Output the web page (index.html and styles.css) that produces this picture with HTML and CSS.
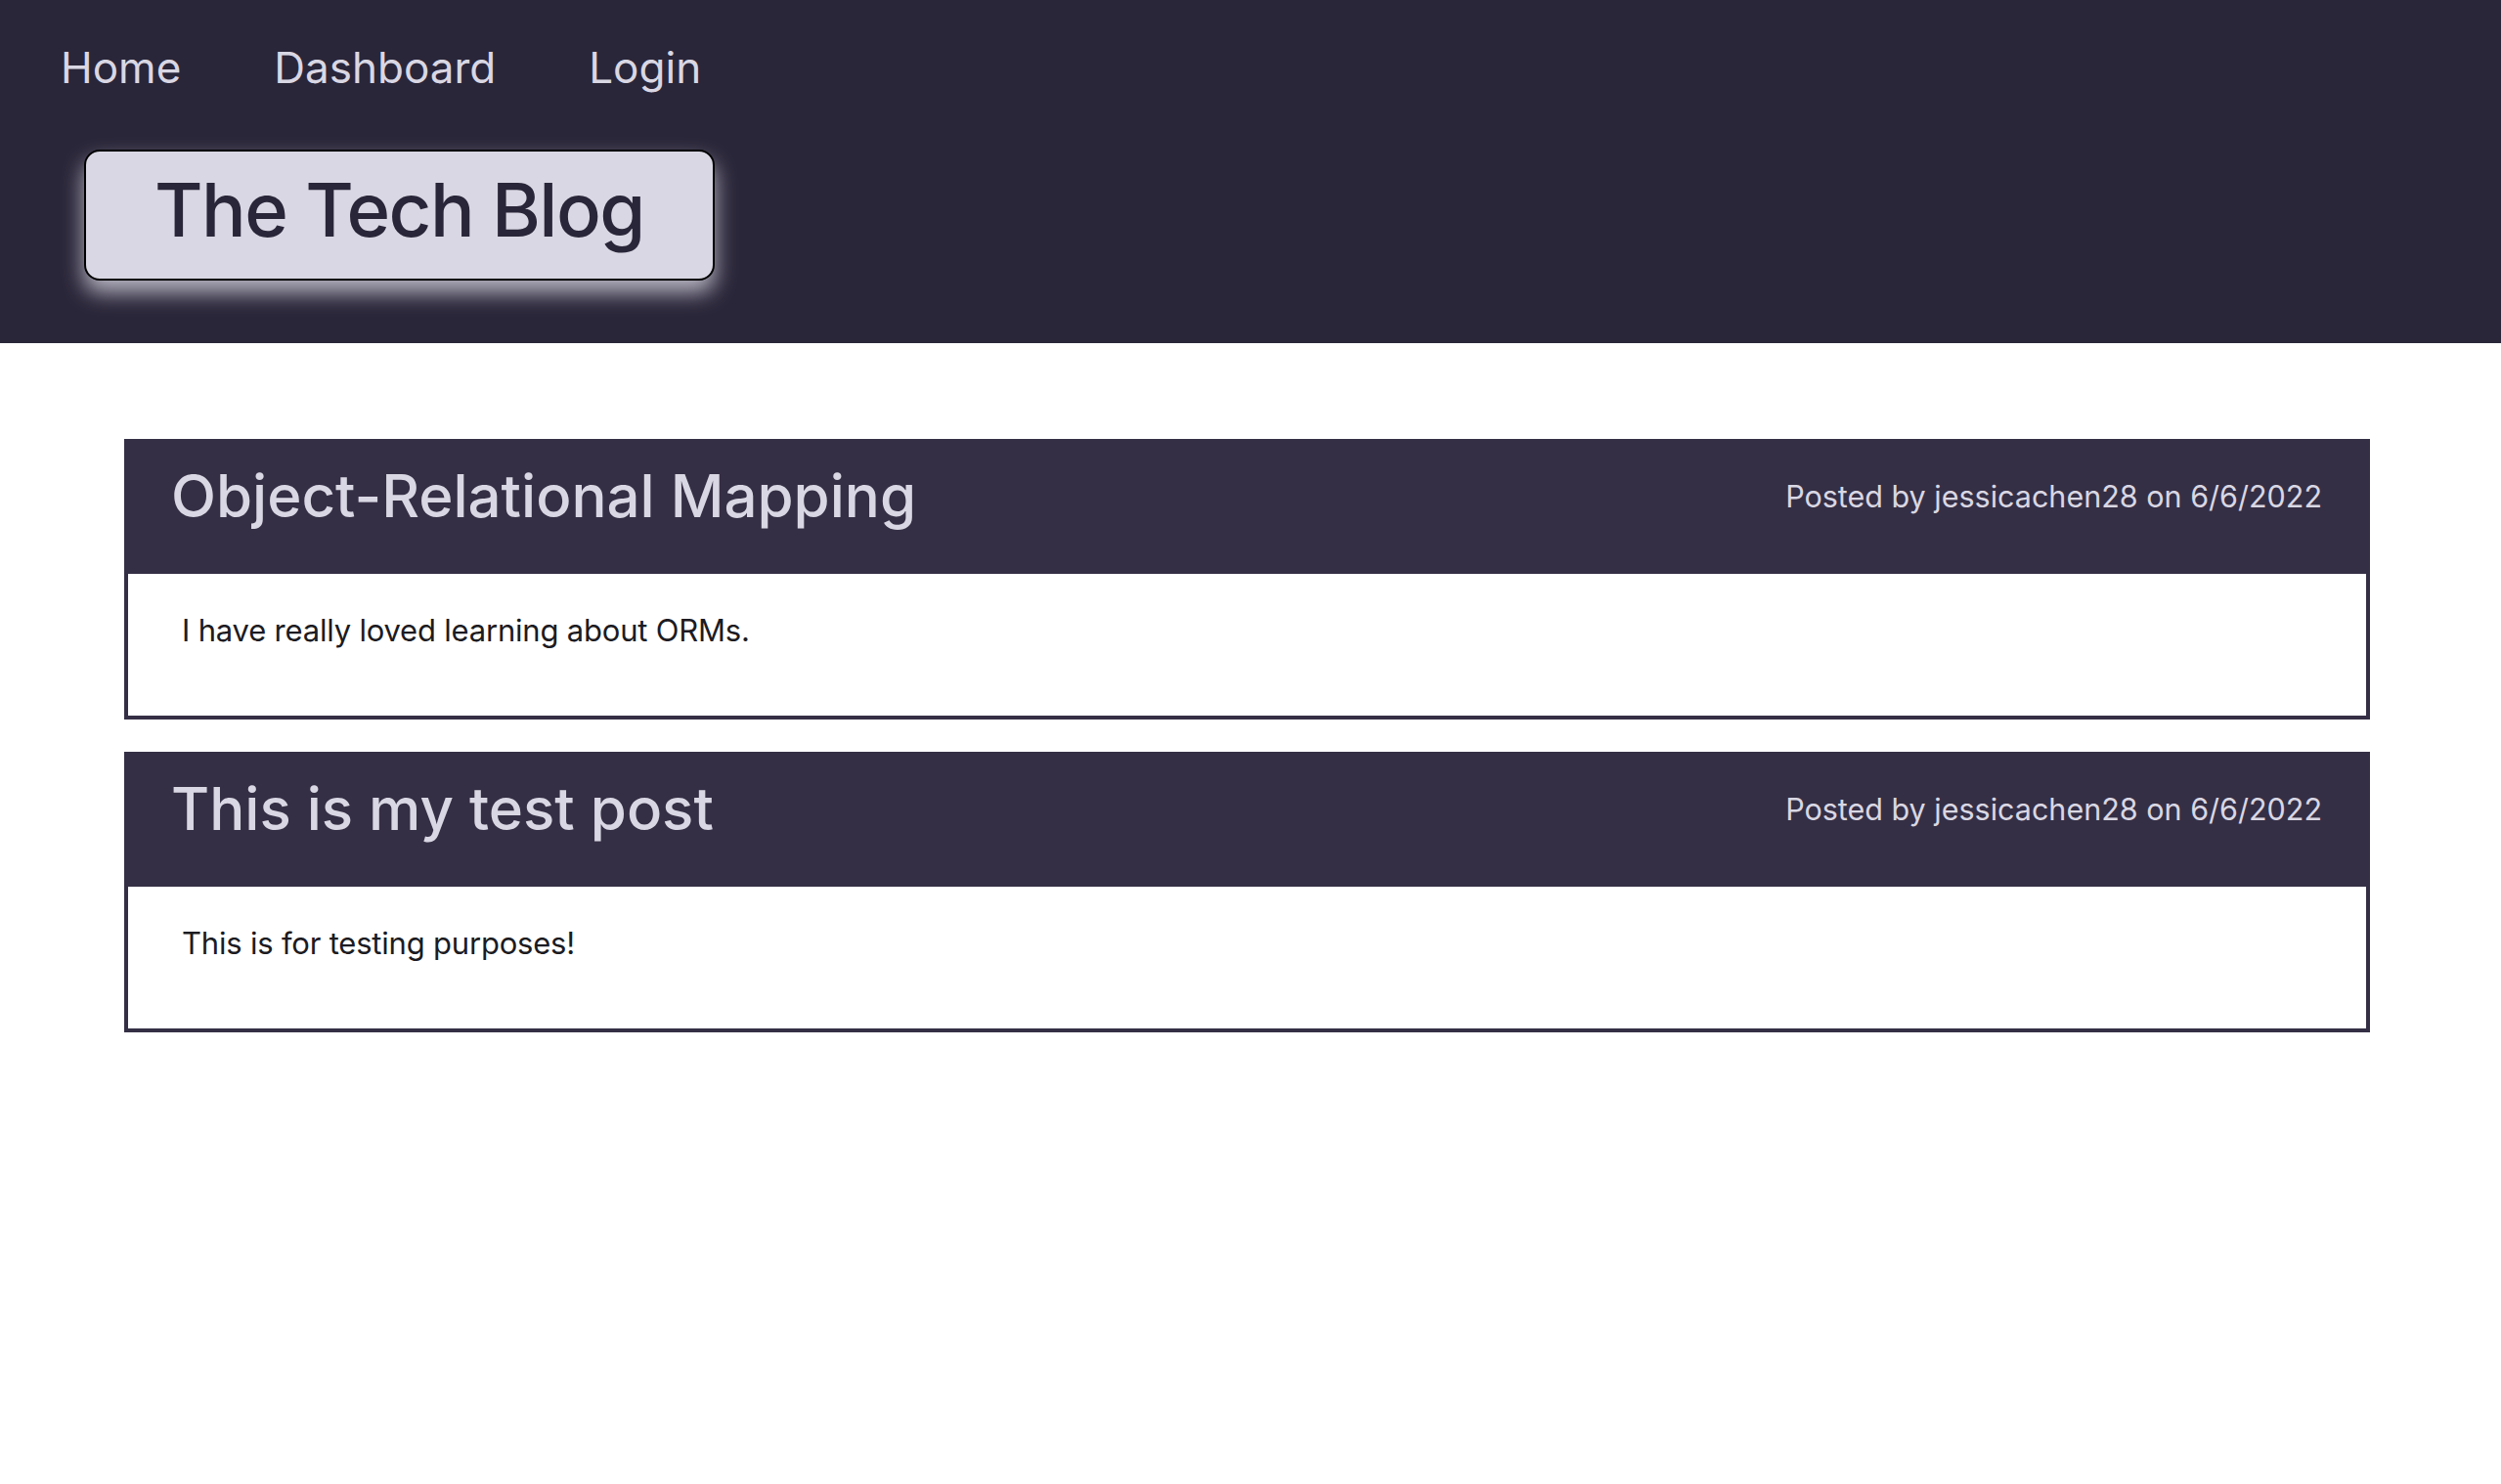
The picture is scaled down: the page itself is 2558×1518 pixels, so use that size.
FILE: index.html
```html
<!DOCTYPE html>
<html lang="en">
<head>
<meta charset="utf-8">
<title>The Tech Blog</title>
<link rel="stylesheet" href="styles.css">
</head>
<body>
<header class="site-header">
  <nav class="nav">
    <a class="nav-link" href="#">Home</a>
    <a class="nav-link" href="#">Dashboard</a>
    <a class="nav-link" href="#">Login</a>
  </nav>
  <div class="brand">
    <h1 class="brand-title">The Tech Blog</h1>
  </div>
</header>
<main class="posts">
  <article class="post">
    <div class="post-head">
      <h2 class="post-title">Object-Relational Mapping</h2>
      <span class="post-meta">Posted by jessicachen28 on 6/6/2022</span>
    </div>
    <div class="post-body">
      <p class="post-text">I have really loved learning about ORMs.</p>
    </div>
  </article>
  <article class="post">
    <div class="post-head">
      <h2 class="post-title">This is my test post</h2>
      <span class="post-meta">Posted by jessicachen28 on 6/6/2022</span>
    </div>
    <div class="post-body">
      <p class="post-text">This is for testing purposes!</p>
    </div>
  </article>
</main>
</body>
</html>
```
FILE: styles.css
```css
* { box-sizing: border-box; }
html, body {
  margin: 0;
  padding: 0;
  background: #ffffff;
  font-family: Inter, "Noto Sans", "Liberation Sans", sans-serif;
}
.site-header {
  background: #2a2639;
  padding: 36px 0 64px 0;
}
.nav {
  display: flex;
  gap: 95px;
  padding-left: 62px;
}
.nav-link {
  color: #d9d7e3;
  text-decoration: none;
  font-size: 44px;
  line-height: 66px;
}
.brand {
  display: inline-flex;
  margin: 51px 0 0 86px;
  background: #d9d7e3;
  border: 2px solid #000000;
  border-radius: 16px;
  box-shadow: 0 12px 22px rgba(217, 215, 227, 0.8);
  padding: 0 70px 12px 70px;
}
.brand-title {
  margin: 0;
  color: #2a2639;
  font-size: 76px;
  font-weight: 500;
  line-height: 118px;
  letter-spacing: -1.5px;
}
.posts {
  padding: 98px 134px 0 127px;
  display: flex;
  flex-direction: column;
  gap: 33px;
}
.post {
  border: 4px solid #352f45;
}
.post-head {
  background: #352f45;
  height: 138px;
  margin: -4px -4px 0 -4px;
  padding: 0 49px 22px 48px;
  display: flex;
  align-items: center;
  justify-content: space-between;
}
.post-title {
  margin: 0;
  color: #d9d7e3;
  font-size: 60px;
  font-weight: 500;
}
.post-meta {
  color: #d9d7e3;
  font-size: 30.5px;
}
.post-body {
  padding: 38px 55px 0 55px;
  height: 145px;
}
.post-text {
  margin: 0;
  color: #1c1b22;
  font-size: 31px;
  line-height: 40px;
  letter-spacing: -0.2px;
}
```
